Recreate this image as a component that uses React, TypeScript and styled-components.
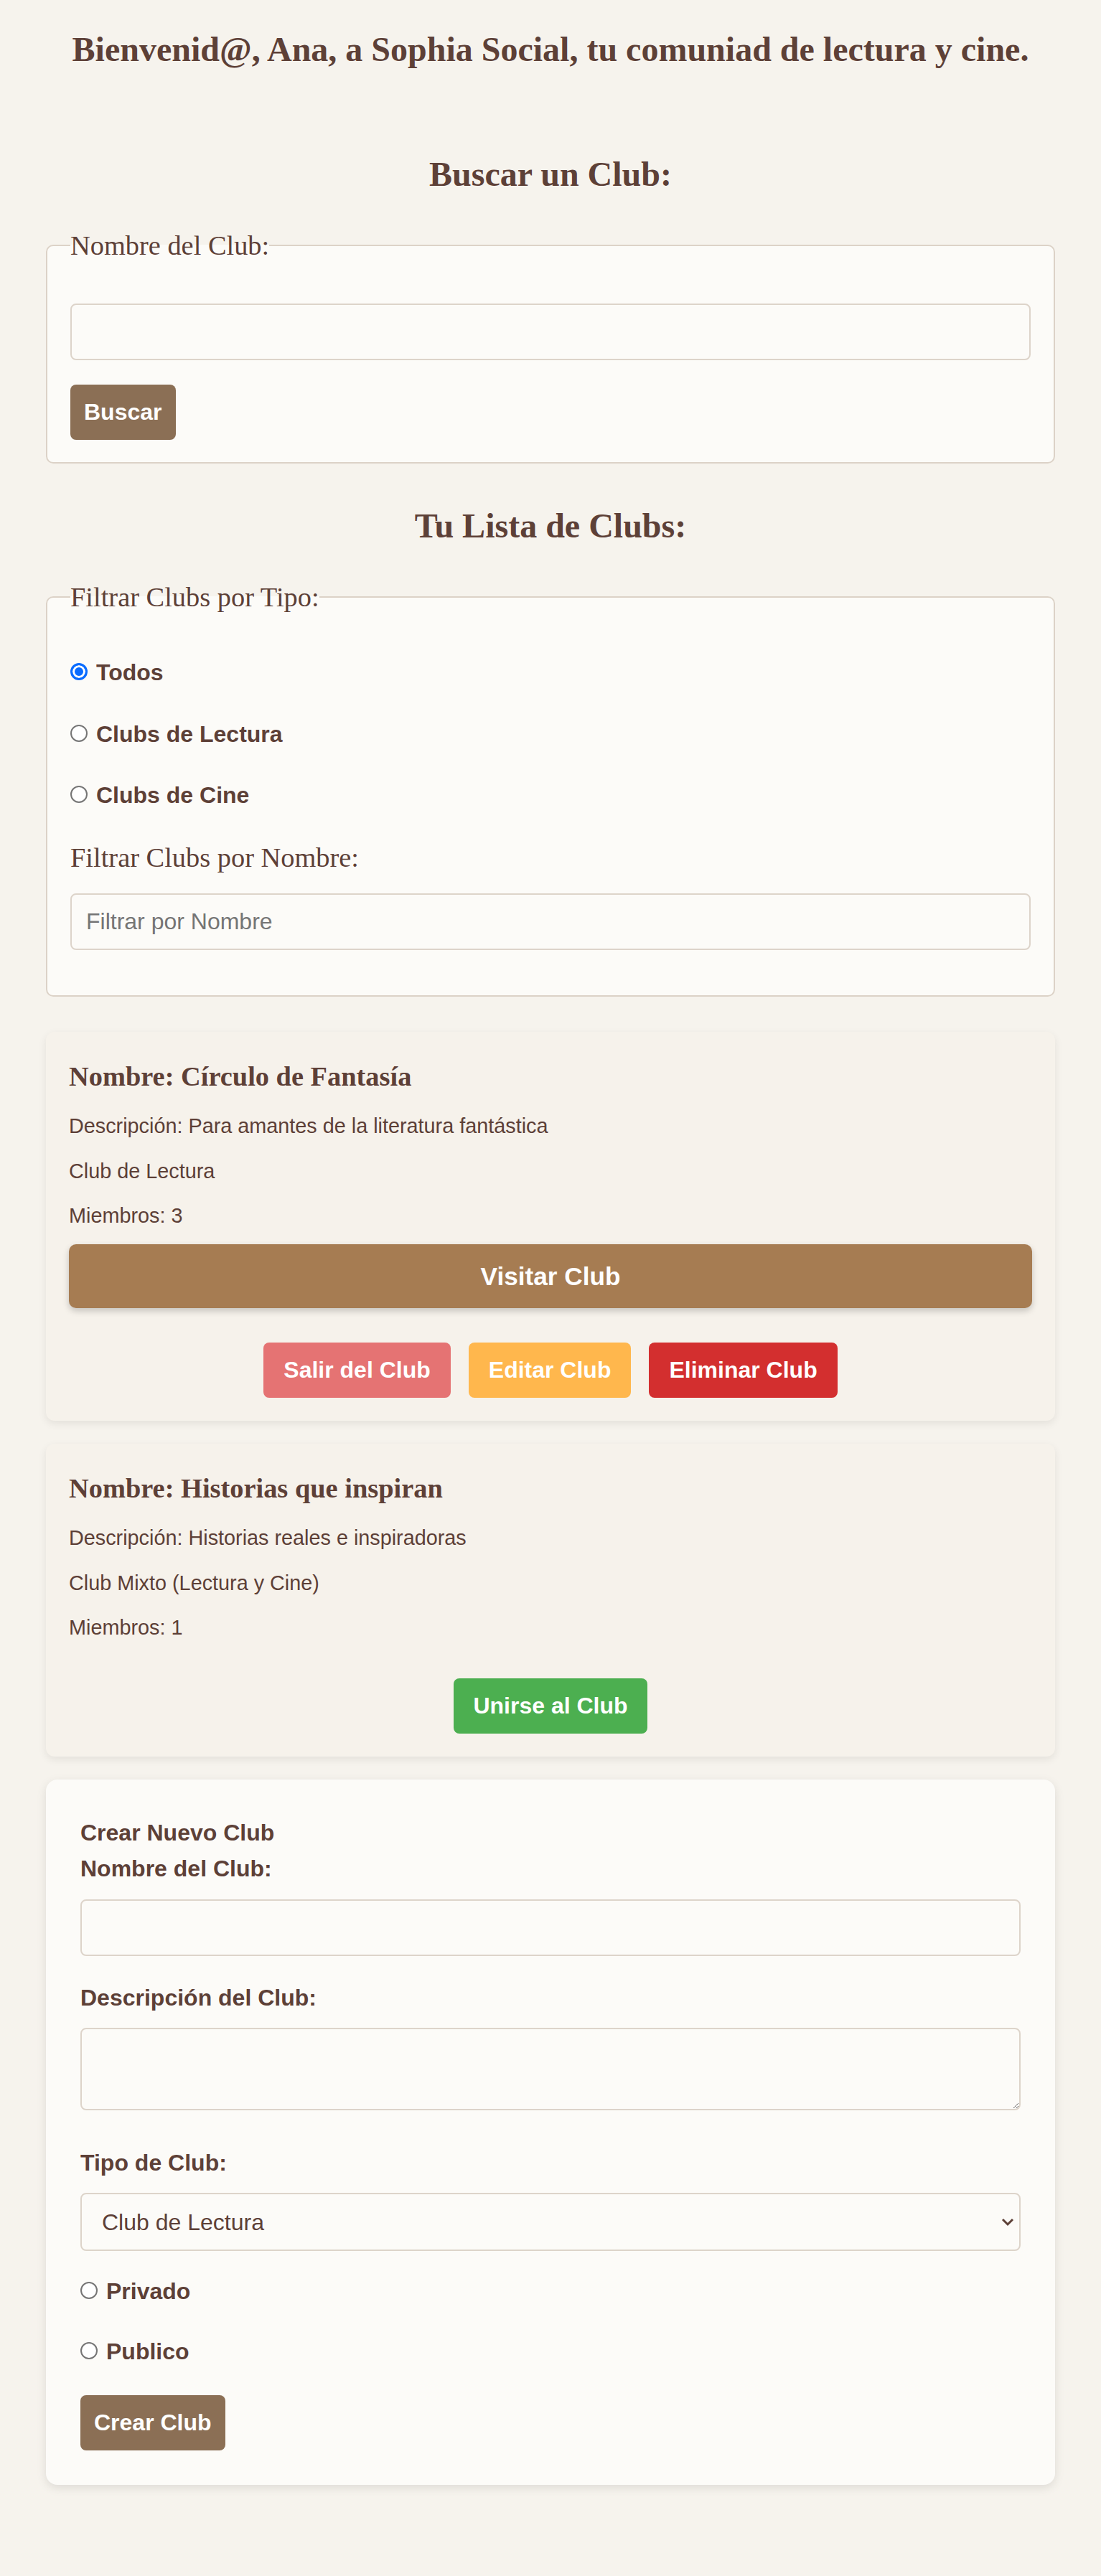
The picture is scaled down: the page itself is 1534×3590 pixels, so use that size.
import React from "react";
import styled, { createGlobalStyle } from "styled-components";

const GlobalStyle = createGlobalStyle`
  html, body { margin: 0; padding: 0; background: #f6f3ed; }
  body { font-family: "Liberation Sans", Arial, sans-serif; color: #5d4037; }
  *, *::before, *::after { box-sizing: border-box; }
`;

const Page = styled.main`
  padding: 41px 64px 127px;
`;

const Title = styled.h1`
  margin: 0 0 119px;
  font-family: "Liberation Serif", "Times New Roman", serif;
  font-size: 48px;
  line-height: 55px;
  font-weight: 700;
  text-align: center;
  color: #5d4037;
`;

const SectionTitle = styled.h2`
  margin: 59px 0 50px;
  font-family: "Liberation Serif", "Times New Roman", serif;
  font-size: 48px;
  line-height: 55px;
  font-weight: 700;
  text-align: center;
  color: #5d4037;
`;

const Fieldset = styled.fieldset<{ $pt: number; $pb: number }>`
  margin: 0;
  min-width: 0;
  border: 2px solid #dcd2c7;
  border-radius: 10px;
  background: #fcfbf8;
  padding: ${(p) => p.$pt}px 32px ${(p) => p.$pb}px;
  display: flex;
  flex-direction: column;
  align-items: flex-start;
`;

const Legend = styled.legend`
  padding: 0;
  font-family: "Liberation Serif", "Times New Roman", serif;
  font-size: 38.4px;
  line-height: 44px;
  color: #5d4037;
`;

const TextInput = styled.input<{ $mt?: number }>`
  display: block;
  width: 100%;
  height: 79px;
  margin: ${(p) => p.$mt ?? 0}px 0 0;
  padding: 19px 20px;
  border: 2px solid #ddd4ca;
  border-radius: 8px;
  background: #fcfbf8;
  font-family: "Liberation Sans", Arial, sans-serif;
  font-size: 32px;
  color: #5d4037;
  outline: none;
  &::placeholder { color: #757575; }
`;

const TextArea = styled.textarea<{ $mt?: number }>`
  display: block;
  width: 100%;
  height: 115px;
  margin: ${(p) => p.$mt ?? 0}px 0 0;
  padding: 19px 20px;
  border: 2px solid #ddd4ca;
  border-radius: 8px;
  background: #fcfbf8;
  font-family: "Liberation Sans", Arial, sans-serif;
  font-size: 32px;
  color: #5d4037;
  resize: vertical;
  outline: none;
`;

const Button = styled.button<{ $bg: string; $px?: number; $mt?: number }>`
  margin: ${(p) => p.$mt ?? 0}px 0 0;
  padding: 20px ${(p) => p.$px ?? 28}px;
  height: 77px;
  border: none;
  border-radius: 8px;
  background: ${(p) => p.$bg};
  color: #ffffff;
  font-family: "Liberation Sans", Arial, sans-serif;
  font-size: 32px;
  line-height: 37px;
  font-weight: 700;
  cursor: pointer;
`;

const RadioRow = styled.label<{ $mt?: number }>`
  display: flex;
  align-items: center;
  gap: 12px;
  margin-top: ${(p) => p.$mt ?? 0}px;
  font-size: 32px;
  line-height: 37px;
  font-weight: 700;
  color: #5d4037;
`;

const Radio = styled.input`
  appearance: none;
  -webkit-appearance: none;
  width: 24px;
  height: 24px;
  margin: -3px 0 0;
  flex: none;
  border-radius: 50%;
  border: 2px solid #767676;
  background: #ffffff;
  &:checked {
    border: 3px solid #0a6cff;
    background: #0a6cff;
    box-shadow: inset 0 0 0 3px #ffffff;
  }
`;

const SerifLabel = styled.label`
  margin-top: 46px;
  font-family: "Liberation Serif", "Times New Roman", serif;
  font-size: 38.4px;
  line-height: 44px;
  color: #5d4037;
`;

const CardList = styled.section`
  margin-top: 49px;
  display: flex;
  flex-direction: column;
  gap: 32px;
`;

const ClubCard = styled.article`
  background: #f6f2eb;
  border-radius: 12px;
  box-shadow: 0 4px 12px rgba(0, 0, 0, 0.08);
  padding: 40px 32px 32px;
  display: flex;
  flex-direction: column;
`;

const ClubName = styled.h3`
  margin: 0 0 31px;
  font-family: "Liberation Serif", "Times New Roman", serif;
  font-size: 38.4px;
  line-height: 44px;
  font-weight: 700;
  color: #5d4037;
`;

const ClubInfo = styled.p`
  margin: 0 0 29.5px;
  font-size: 28.8px;
  line-height: 33px;
  color: #5d4037;
  &:last-of-type { margin-bottom: 0; }
`;

const VisitButton = styled.button`
  margin-top: 23px;
  width: 100%;
  height: 89px;
  border: none;
  border-radius: 10px;
  background: #a67c52;
  color: #ffffff;
  font-family: "Liberation Sans", Arial, sans-serif;
  font-size: 35.2px;
  font-weight: 700;
  box-shadow: 0 4px 10px rgba(0, 0, 0, 0.2);
  cursor: pointer;
`;

const Actions = styled.div<{ $mt: number }>`
  margin-top: ${(p) => p.$mt}px;
  display: flex;
  justify-content: center;
  gap: 25px;
`;

const CreateCard = styled.form`
  margin-top: 32px;
  background: #fcfbf8;
  border-radius: 16px;
  box-shadow: 0 4px 14px rgba(0, 0, 0, 0.1);
  padding: 56px 48px 48px;
  display: flex;
  flex-direction: column;
  align-items: flex-start;
`;

const FormTitle = styled.h4`
  margin: 0;
  font-size: 32px;
  line-height: 37px;
  font-weight: 700;
  color: #5d4037;
`;

const FormLabel = styled.label<{ $mt: number }>`
  display: block;
  margin-top: ${(p) => p.$mt}px;
  font-size: 32px;
  line-height: 37px;
  font-weight: 700;
  color: #5d4037;
`;

const SelectWrap = styled.div`
  position: relative;
  width: 100%;
  margin-top: 23px;
`;

const Select = styled.select`
  display: block;
  width: 100%;
  height: 81px;
  padding: 20px 28px;
  border: 2px solid #ddd4ca;
  border-radius: 8px;
  background: #fcfbf8;
  font-family: "Liberation Sans", Arial, sans-serif;
  font-size: 32px;
  color: #5d4037;
  appearance: none;
  -webkit-appearance: none;
  outline: none;
`;

const Chevron = styled.svg`
  position: absolute;
  right: 9px;
  top: 50%;
  margin-top: -6px;
  pointer-events: none;
`;

export default function App() {
  return (
    <>
      <GlobalStyle />
      <Page>
        <Title>Bienvenid@, Ana, a Sophia Social, tu comuniad de lectura y cine.</Title>

        <SectionTitle>Buscar un Club:</SectionTitle>
        <Fieldset $pt={59} $pb={31}>
          <Legend>Nombre del Club:</Legend>
          <TextInput type="text" />
          <Button type="button" $bg="#8b6f55" $px={19} $mt={34}>Buscar</Button>
        </Fieldset>

        <SectionTitle>Tu Lista de Clubs:</SectionTitle>
        <Fieldset $pt={65} $pb={63}>
          <Legend>Filtrar Clubs por Tipo:</Legend>
          <RadioRow>
            <Radio type="radio" name="tipo" defaultChecked />
            Todos
          </RadioRow>
          <RadioRow $mt={49}>
            <Radio type="radio" name="tipo" />
            Clubs de Lectura
          </RadioRow>
          <RadioRow $mt={48}>
            <Radio type="radio" name="tipo" />
            Clubs de Cine
          </RadioRow>
          <SerifLabel>Filtrar Clubs por Nombre:</SerifLabel>
          <TextInput type="text" placeholder="Filtrar por Nombre" $mt={28} />
        </Fieldset>

        <CardList>
          <ClubCard>
            <ClubName>Nombre: Círculo de Fantasía</ClubName>
            <ClubInfo>Descripción: Para amantes de la literatura fantástica</ClubInfo>
            <ClubInfo>Club de Lectura</ClubInfo>
            <ClubInfo>Miembros: 3</ClubInfo>
            <VisitButton type="button">Visitar Club</VisitButton>
            <Actions $mt={48}>
              <Button type="button" $bg="#e57373">Salir del Club</Button>
              <Button type="button" $bg="#ffb74d">Editar Club</Button>
              <Button type="button" $bg="#d32f2f">Eliminar Club</Button>
            </Actions>
          </ClubCard>

          <ClubCard>
            <ClubName>Nombre: Historias que inspiran</ClubName>
            <ClubInfo>Descripción: Historias reales e inspiradoras</ClubInfo>
            <ClubInfo>Club Mixto (Lectura y Cine)</ClubInfo>
            <ClubInfo>Miembros: 1</ClubInfo>
            <Actions $mt={54}>
              <Button type="button" $bg="#4caf50" $px={27}>Unirse al Club</Button>
            </Actions>
          </ClubCard>
        </CardList>

        <CreateCard onSubmit={(e) => e.preventDefault()}>
          <FormTitle>Crear Nuevo Club</FormTitle>
          <FormLabel $mt={13}>Nombre del Club:</FormLabel>
          <TextInput type="text" $mt={24} />
          <FormLabel $mt={40}>Descripción del Club:</FormLabel>
          <TextArea $mt={23} />
          <FormLabel $mt={55}>Tipo de Club:</FormLabel>
          <SelectWrap>
            <Select defaultValue="lectura">
              <option value="lectura">Club de Lectura</option>
              <option value="cine">Club de Cine</option>
              <option value="mixto">Club Mixto (Lectura y Cine)</option>
            </Select>
            <Chevron width="18" height="12" viewBox="0 0 18 12">
              <polyline points="2,2 9,9 16,2" fill="none" stroke="#5d4037" strokeWidth="3" />
            </Chevron>
          </SelectWrap>
          <RadioRow $mt={38}>
            <Radio type="radio" name="privacidad" />
            Privado
          </RadioRow>
          <RadioRow $mt={47}>
            <Radio type="radio" name="privacidad" />
            Publico
          </RadioRow>
          <Button type="submit" $bg="#8b6f55" $px={19} $mt={42}>Crear Club</Button>
        </CreateCard>
      </Page>
    </>
  );
}
